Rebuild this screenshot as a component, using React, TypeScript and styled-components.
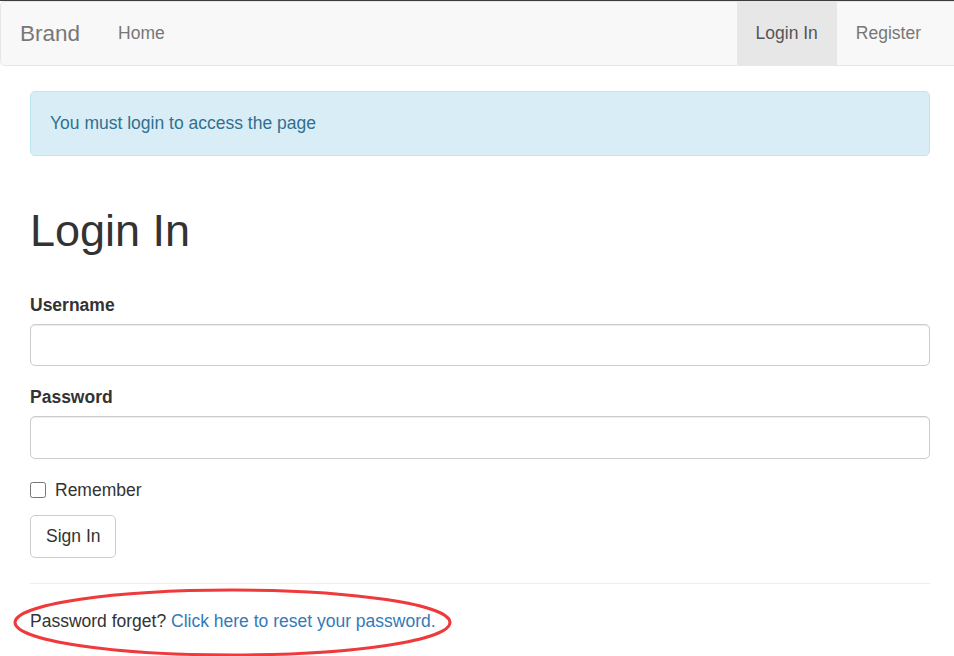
import styled, { createGlobalStyle } from "styled-components";

const GlobalStyle = createGlobalStyle`
  html, body {
    margin: 0;
    padding: 0;
    background: #fff;
  }
  body {
    font-family: "Liberation Sans", Arial, sans-serif;
    font-size: 17.5px;
    line-height: 25px;
    color: #333;
    overflow: hidden;
  }
  * {
    box-sizing: border-box;
  }
`;

const Page = styled.div`
  border-top: 1px solid #3c3c3c;
  min-height: 656px;
`;

const Navbar = styled.nav`
  height: 65px;
  background-color: #f8f8f8;
  border: 1px solid #e7e7e7;
  border-right: none;
  border-radius: 5px 0 0 5px;
  margin-bottom: 25px;

  display: flex;
  justify-content: space-between;
`;

const NavGroup = styled.ul`
  list-style: none;
  margin: 0;
  padding: 0;
  display: flex;
`;

const RightGroup = styled(NavGroup)`
  margin-right: 14px;
`;

const Brand = styled.a`
  padding: 0 19px;
  font-size: 22.5px;
  line-height: 63px;
  color: #777;
  text-decoration: none;
`;

const NavLink = styled.a<{ $active?: boolean }>`
  display: block;
  padding: 0 19px;
  line-height: 63px;
  font-size: 17.5px;
  text-decoration: none;
  color: ${(p) => (p.$active ? "#555" : "#777")};
  background-color: ${(p) => (p.$active ? "#e7e7e7" : "transparent")};
`;

const Container = styled.main`
  width: 900px;
  margin-left: 30px;
`;

const Alert = styled.div`
  padding: 19px;
  border: 1px solid #bce8f1;
  border-radius: 5px;
  background-color: #d9edf7;
  color: #31708f;
  margin-bottom: 25px;
`;

const Title = styled.h1`
  font-size: 45px;
  font-weight: 500;
  line-height: 49.5px;
  margin: 50px 0 37px;
  color: #333;
`;

const FormGroup = styled.div`
  margin-bottom: 18.75px;
`;

const Label = styled.label`
  display: block;
  font-weight: 700;
  margin-bottom: 6.25px;
`;

const Input = styled.input`
  display: block;
  width: 100%;
  height: 42.5px;
  padding: 7.5px 15px;
  font-family: inherit;
  font-size: 17.5px;
  border: 1px solid #ccc;
  border-radius: 5px;
  box-shadow: inset 0 1px 1px rgba(0, 0, 0, 0.075);
  outline: none;
`;

const CheckRow = styled.label`
  display: flex;
  align-items: center;
  height: 25px;
  margin-bottom: 12.5px;
`;

const CheckBox = styled.input`
  appearance: none;
  width: 16px;
  height: 16px;
  margin: 0 9px 0 0;
  border: 1px solid #767676;
  border-radius: 2.5px;
  background: #fff;
`;

const Button = styled.button`
  height: 42.5px;
  padding: 0 15px;
  font-family: inherit;
  font-size: 17.5px;
  color: #333;
  background-color: #fff;
  border: 1px solid #ccc;
  border-radius: 5px;
`;

const Divider = styled.hr`
  margin: 25px 0;
  border: 0;
  border-top: 1px solid #eee;
`;

const Note = styled.p`
  position: relative;
  margin: 0;
`;

const Link = styled.a`
  color: #337ab7;
  text-decoration: none;
`;

const Circle = styled.svg`
  position: absolute;
  left: -17px;
  top: -21px;
  pointer-events: none;
`;

export default function App() {
  return (
    <>
      <GlobalStyle />
      <Page>
        <Navbar>
          <NavGroup>
            <Brand href="#">Brand</Brand>
            <li>
              <NavLink href="#">Home</NavLink>
            </li>
          </NavGroup>
          <RightGroup>
            <li>
              <NavLink href="#" $active>
                Login In
              </NavLink>
            </li>
            <li>
              <NavLink href="#">Register</NavLink>
            </li>
          </RightGroup>
        </Navbar>

        <Container>
          <Alert>You must login to access the page</Alert>
          <Title>Login In</Title>
          <form onSubmit={(e) => e.preventDefault()}>
            <FormGroup>
              <Label htmlFor="username">Username</Label>
              <Input id="username" type="text" />
            </FormGroup>
            <FormGroup>
              <Label htmlFor="password">Password</Label>
              <Input id="password" type="password" />
            </FormGroup>
            <CheckRow>
              <CheckBox type="checkbox" />
              Remember
            </CheckRow>
            <Button type="submit">Sign In</Button>
          </form>
          <Divider />
          <Note>
            Password forget? <Link href="#">Click here to reset your password.</Link>
            <Circle width="442" height="70" viewBox="0 0 442 70">
              <ellipse cx="219.5" cy="34.5" rx="217.5" ry="32.5" fill="none" stroke="#ee3a3c" strokeWidth="3" />
            </Circle>
          </Note>
        </Container>
      </Page>
    </>
  );
}
